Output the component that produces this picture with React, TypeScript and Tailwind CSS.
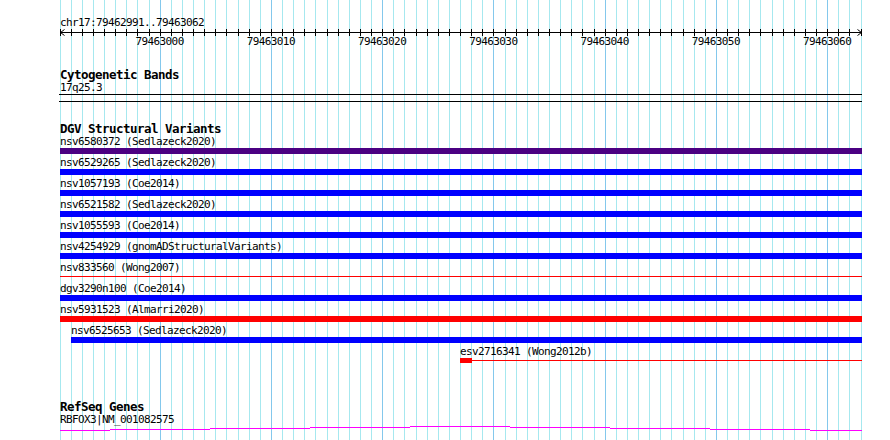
const X0 = 60;
const BP = 11.125;
const gridX = Array.from({ length: 73 }, (_, k) => Math.floor(X0 + k * BP));
const majors = [9, 19, 29, 39, 49, 59, 69];

type Variant = {
  label: string;
  kind: "bar" | "line" | "stub";
  color: string;
  indent?: string;
};

const variants: Variant[] = [
  { label: "nsv6580372 (Sedlazeck2020)", kind: "bar", color: "bg-[#4b0082]" },
  { label: "nsv6529265 (Sedlazeck2020)", kind: "bar", color: "bg-[#0000ff]" },
  { label: "nsv1057193 (Coe2014)", kind: "bar", color: "bg-[#0000ff]" },
  { label: "nsv6521582 (Sedlazeck2020)", kind: "bar", color: "bg-[#0000ff]" },
  { label: "nsv1055593 (Coe2014)", kind: "bar", color: "bg-[#0000ff]" },
  { label: "nsv4254929 (gnomADStructuralVariants)", kind: "bar", color: "bg-[#0000ff]" },
  { label: "nsv833560 (Wong2007)", kind: "line", color: "bg-[#ff0000]" },
  { label: "dgv3290n100 (Coe2014)", kind: "bar", color: "bg-[#0000ff]" },
  { label: "nsv5931523 (Almarri2020)", kind: "bar", color: "bg-[#ff0000]" },
  { label: "nsv6525653 (Sedlazeck2020)", kind: "bar", color: "bg-[#0000ff]", indent: "ml-[11px]" },
  { label: "esv2716341 (Wong2012b)", kind: "stub", color: "bg-[#ff0000]", indent: "ml-[400px]" },
];

// stepped transcript line: [start, end, y]
const geneSteps: [number, number, number][] = [
  [60, 110, 429],
  [110, 210, 428],
  [210, 310, 427],
  [310, 410, 426],
  [410, 510, 425],
  [510, 610, 426],
  [610, 710, 427],
  [710, 810, 428],
  [810, 862, 429],
];

const small = "text-[11px] tracking-[-0.62px] leading-[12px] h-[12px] whitespace-nowrap";
const title = "text-[12.5px] tracking-[-0.53px] font-bold leading-[14px] h-[14px] whitespace-nowrap";

function Grid() {
  return (
    <svg className="absolute inset-0" width={890} height={440} shapeRendering="crispEdges">
      {gridX.map((x, k) => (
        <rect
          key={k}
          x={x}
          y={0}
          width={1}
          height={440}
          fill={majors.includes(k) ? "#84c8ec" : "#a6e8ef"}
        />
      ))}
    </svg>
  );
}

function Ruler() {
  return (
    <svg width={802} height={7} className="block overflow-visible" shapeRendering="crispEdges">
      <rect x={0} y={3} width={802} height={1} fill="#000" />
      {gridX.map((x, k) => (
        <rect key={k} x={x - X0} y={0} width={1} height={7} fill="#000" />
      ))}
      <path d="M4.5 0.5 L0.5 3.5 L4.5 6.5" stroke="#000" fill="none" shapeRendering="auto" />
      <path d="M797.5 0.5 L801.5 3.5 L797.5 6.5" stroke="#000" fill="none" shapeRendering="auto" />
    </svg>
  );
}

function VariantRow({ v }: { v: Variant }) {
  return (
    <div className={`flex flex-col mb-[3px] ${v.indent ?? ""}`}>
      <div className={small}>{v.label}</div>
      {v.kind === "bar" && <div className={`h-[6px] ${v.color}`} />}
      {v.kind === "line" && (
        <div className="h-[6px] pt-[2px]">
          <div className={`h-[1px] ${v.color}`} />
        </div>
      )}
      {v.kind === "stub" && (
        <div className="h-[6px] flex">
          <div className={`w-[12px] h-[5px] ${v.color}`} />
          <div className="flex-1 pt-[2px]">
            <div className={`h-[1px] ${v.color}`} />
          </div>
        </div>
      )}
    </div>
  );
}

export default function App() {
  return (
    <div className="relative w-[890px] h-[440px] bg-white overflow-hidden text-black font-['DejaVu_Sans_Mono',monospace]">
      <Grid />
      <div className="relative ml-[60px] w-[802px] flex flex-col">
        <div className={`${small} mt-[17px] h-[11px] leading-[11px]`}>chr17:79462991..79463062</div>
        <Ruler />
        <div className="flex h-[11px] leading-[11px] text-[11px] tracking-[-0.62px] pl-[44px]">
          {majors.map((k) => (
            <div key={k} className="w-[111.25px] shrink-0 text-center whitespace-nowrap">
              {79462991 + k}
            </div>
          ))}
        </div>

        <div className={`${title} mt-[21px]`}>Cytogenetic Bands</div>
        <div className="text-[11px] tracking-[-0.62px] h-[11px] leading-[11px]">17q25.3</div>
        <div className="mt-[1px] -ml-[1px] h-[8px] border-y border-black" />

        <div className={`${title} mt-[20px]`}>DGV Structural Variants</div>
        <div className="flex flex-col">
          {variants.map((v) => (
            <VariantRow key={v.label} v={v} />
          ))}
        </div>

        <div className={`${title} mt-[33px]`}>RefSeq Genes</div>
        <div className="text-[11px] tracking-[-0.62px] h-[11px] leading-[11px]">RBFOX3|NM_001082575</div>
        <svg width={802} height={16} className="block" shapeRendering="crispEdges">
          {geneSteps.map(([a, b, y]) => (
            <rect key={a} x={a - X0} y={y - 424} width={b - a} height={1} fill="#ff00ff" />
          ))}
        </svg>
      </div>
    </div>
  );
}
